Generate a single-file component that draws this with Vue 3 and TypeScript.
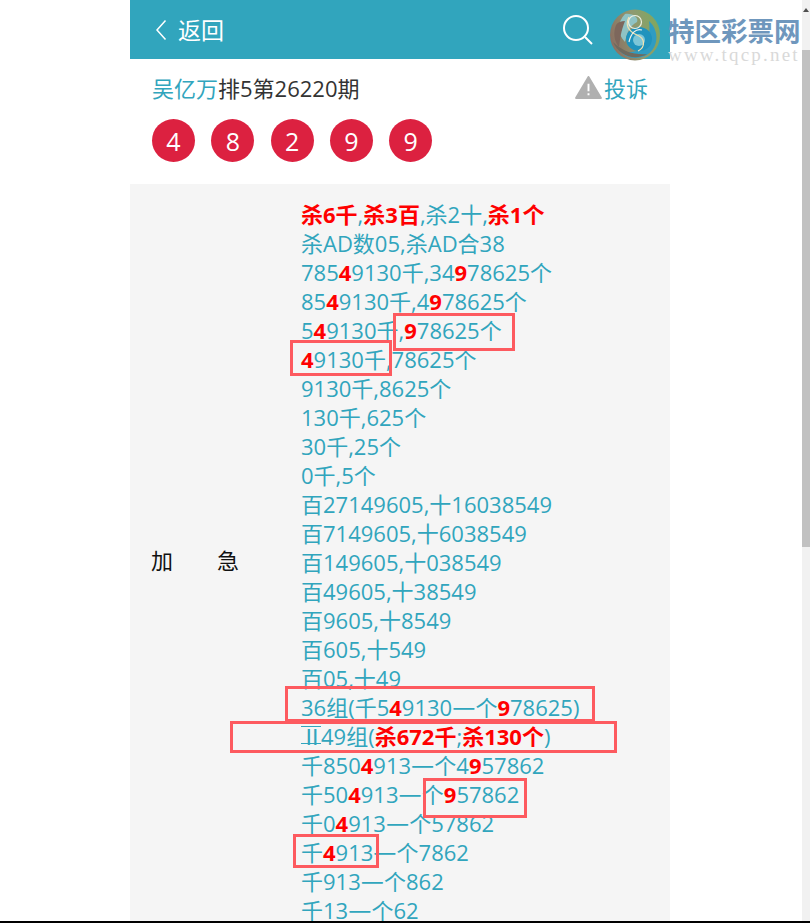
<template>
  <div class="page">
    <main class="phone">
      <header class="topbar">
        <div class="back">
          <svg class="chevron" viewBox="0 0 12 22" fill="none" stroke="#fff" stroke-width="1.5">
            <path d="M10.5 1.5L2 11l8.500 9.500" />
          </svg>
          <span>返回</span>
        </div>
        <svg class="search" viewBox="0 0 32 32" fill="none" stroke="#fff" stroke-width="2">
          <circle cx="14" cy="14" r="12" />
          <path d="M23 23l7 7" />
        </svg>
      </header>

      <section class="title-row">
        <div class="title"><span class="author">吴亿万</span>排5第26220期</div>
        <div class="report">
          <svg class="warn" viewBox="0 0 28 24">
            <path d="M14 1L27 23H1z" fill="#b0b0b0" stroke="#b0b0b0" stroke-width="2" stroke-linejoin="round" />
            <path d="M14 8v8M14 18v2" stroke="#fff" stroke-width="2" />
          </svg>
          <span>投诉</span>
        </div>
      </section>

      <div class="balls">
        <span v-for="(n, i) in balls" :key="i" class="ball">{{ n }}</span>
      </div>

      <section class="panel">
        <div class="label"><span>加</span><span>急</span></div>
        <div class="lines">
          <div v-for="(line, i) in lines" :key="i" class="line">
            <template v-for="(part, j) in line" :key="j">
              <b v-if="part.hot">{{ part.text }}</b>
              <span v-else-if="part.text === '—'" class="dash">{{ part.text }}</span>
              <span v-else-if="part.text === 'Ⅱ'" class="roman">{{ part.text }}</span>
              <template v-else>{{ part.text }}</template>
            </template>
          </div>
        </div>
      </section>
    </main>

    <!-- red boxes drawn over the text in the screenshot -->
    <i v-for="(box, i) in boxes" :key="i" class="mark" :style="box"></i>

    <div class="logo">
      <svg class="logo-mark" viewBox="0 0 52 52">
        <defs>
          <linearGradient id="rim" x1="0" y1="0.6" x2="1" y2="0.3">
            <stop offset="0" stop-color="#8a6f62" />
            <stop offset="0.55" stop-color="#8f9a70" />
            <stop offset="1" stop-color="#7fa85e" />
          </linearGradient>
        </defs>
        <ellipse cx="26" cy="26" rx="25" ry="25.500" fill="url(#rim)" />
        <path d="M16 5c-8 8-8 20 0 28 2-8 4-16 12-20 2-4-4-9-12-8z" fill="#8fc3c4" />
        <path d="M40 12c11 10 10 28-4 35-10 4-20 2-26-6 14 6 34 0 30-29z" fill="#2f9cc2" />
        <ellipse cx="30" cy="30" rx="13" ry="12" fill="#1f93bd" />
        <circle cx="30" cy="31" r="6" fill="#7cc6d8" />
        <path d="M4 33c6 14 22 19 34 12-12 1-24-2-34-12z" fill="#6f6a5e" />
        <path d="M7 16c-3 8-2 16 3 22 1-8 2-16 6-26-4 0-7 1-9 4z" fill="#7d675c" />
        <path d="M20 8c-4 8-1 14 8 18 8 3 9 12 1 16" fill="none" stroke="#f3e2b0" stroke-width="1.200" />
        <circle cx="26" cy="13" r="6.500" fill="none" stroke="#eef0e0" stroke-width="1.200" />
        <path d="M33 21c-6-2-11 3-13 12" fill="none" stroke="#f2f2ea" stroke-width="1.200" />
      </svg>
      <div class="logo-text">
        <div class="logo-name">特区彩票网</div>
        <div class="logo-url">www.tqcp.net</div>
      </div>
    </div>

    <div class="scrollbar">
      <span class="arrow"></span>
      <span class="thumb"></span>
    </div>
    <div class="baseline"></div>
  </div>
</template>

<script setup lang="ts">
interface Part {
  text: string
  hot?: boolean
}

const balls = [4, 8, 2, 9, 9]

// "*x*" marks a bold red run; the dash and the roman two get a font of their own
const parse = (src: string): Part[] =>
  src
    .split(/(\*[^*]*\*|[—Ⅱ])/)
    .filter((s) => s !== '')
    .map((s) => ({ text: s.replace(/\*/g, ''), hot: s.startsWith('*') }))

const lines = [
  '*杀6千*,*杀3百*,杀2十,*杀1个*',
  '杀AD数05,杀AD合38',
  '785*4*9130千,34*9*78625个',
  '85*4*9130千,4*9*78625个',
  '5*4*9130千,*9*78625个',
  '*4*9130千,78625个',
  '9130千,8625个',
  '130千,625个',
  '30千,25个',
  '0千,5个',
  '百27149605,十16038549',
  '百7149605,十6038549',
  '百149605,十038549',
  '百49605,十38549',
  '百9605,十8549',
  '百605,十549',
  '百05,十49',
  '36组(千5*4*9130—个*9*78625)',
  'Ⅱ49组(*杀672千*;*杀130个*)',
  '千850*4*913—个4*9*57862',
  '千50*4*913—个*9*57862',
  '千0*4*913—个57862',
  '千*4*913—个7862',
  '千913—个862',
  '千13—个62',
].map(parse)

const boxes = [
  { left: '393px', top: '313px', width: '122px', height: '38px' },
  { left: '290px', top: '340px', width: '102px', height: '36px' },
  { left: '285px', top: '686px', width: '310px', height: '36px' },
  { left: '230px', top: '721px', width: '387px', height: '32px' },
  { left: '423px', top: '778px', width: '104px', height: '40px' },
  { left: '293px', top: '834px', width: '86px', height: '34px' },
]
</script>

<style scoped>
.page {
  position: relative;
  width: 810px;
  height: 923px;
  overflow: hidden;
  background: #fff;
  font-family: "Open Sans", "Noto Sans CJK SC", sans-serif;
}

.phone {
  width: 540px;
  margin-left: 130px;
}

.topbar {
  display: flex;
  align-items: center;
  height: 59px;
  padding: 0 0 0 25px;
  background: #31a5bd;
  color: #fff;
  font-size: 23px;
}

.back {
  display: flex;
  align-items: center;
  gap: 11px;
}

.back span {
  margin-bottom: 2px;
}

.chevron {
  width: 12px;
  height: 22px;
}

.search {
  width: 32px;
  height: 32px;
  margin-left: 338px;
}

.title-row {
  display: flex;
  justify-content: space-between;
  align-items: center;
  height: 60px;
  padding: 0 22px 4px;
  box-sizing: border-box;
  font-size: 22px;
  color: #333;
}

.author,
.report {
  color: #31a5bd;
}

.report {
  display: flex;
  align-items: center;
  gap: 2px;
}

.warn {
  width: 27px;
  height: 23px;
}

.balls {
  display: flex;
  gap: 16.300px;
  padding: 0 22px;
  height: 65px;
}

.ball {
  display: flex;
  align-items: center;
  justify-content: center;
  width: 43px;
  height: 43px;
  border-radius: 50%;
  background: #dc2140;
  color: #fff;
  font-size: 25px;
}

.panel {
  display: flex;
  align-items: center;
  background: #f5f5f5;
  padding: 16px 0 0;
}

.label {
  display: flex;
  justify-content: space-between;
  width: 88px;
  margin-left: 21px;
  margin-bottom: 7px;
  font-size: 22px;
  color: #111;
}

.lines {
  margin-left: 62px;
  color: #31a5bd;
  font-size: 22px;
  line-height: 29px;
  white-space: nowrap;
}

.line b {
  color: #f00;
  font-weight: 700;
}

.dash {
  font-family: "Noto Sans CJK SC", sans-serif;
  font-size: 26px;
  line-height: 0;
}

/* top and bottom bars, the installed glyph has none */
.roman {
  display: inline-block;
  box-sizing: border-box;
  width: 20px;
  height: 18px;
  border-top: 1px solid #31a5bd;
  border-bottom: 1px solid #31a5bd;
  font-family: "Noto Sans CJK SC", sans-serif;
  line-height: 16px;
  text-align: center;
}

.mark {
  position: absolute;
  box-sizing: border-box;
  border: 3px solid #fd5a5f;
}

.logo {
  position: absolute;
  left: 609px;
  top: 9px;
  display: flex;
  align-items: flex-start;
}

.logo-mark {
  width: 52px;
  height: 52px;
}

.logo-text {
  margin-left: 7px;
  margin-top: 7px;
}

.logo-name {
  font-size: 26.500px;
  line-height: 31px;
  font-weight: 700;
  color: #6f97bd;
  white-space: nowrap;
}

.logo-url {
  font-family: "Liberation Serif", serif;
  font-size: 19px;
  line-height: 15px;
  letter-spacing: 2.200px;
  color: #d9d9d9;
  white-space: nowrap;
}

.scrollbar {
  position: absolute;
  right: 0;
  top: 0;
  width: 8px;
  height: 921px;
  background: #f1f1f1;
}

.arrow {
  position: absolute;
  left: 1px;
  top: 8px;
  border: 3px solid transparent;
  border-top: 0;
  border-bottom: 4px solid #505050;
}

.thumb {
  position: absolute;
  left: 0;
  top: 50px;
  width: 100%;
  height: 497px;
  background: #c1c1c1;
}

.baseline {
  position: absolute;
  left: 0;
  bottom: 0;
  width: 100%;
  height: 2px;
  background: #000;
}
</style>
